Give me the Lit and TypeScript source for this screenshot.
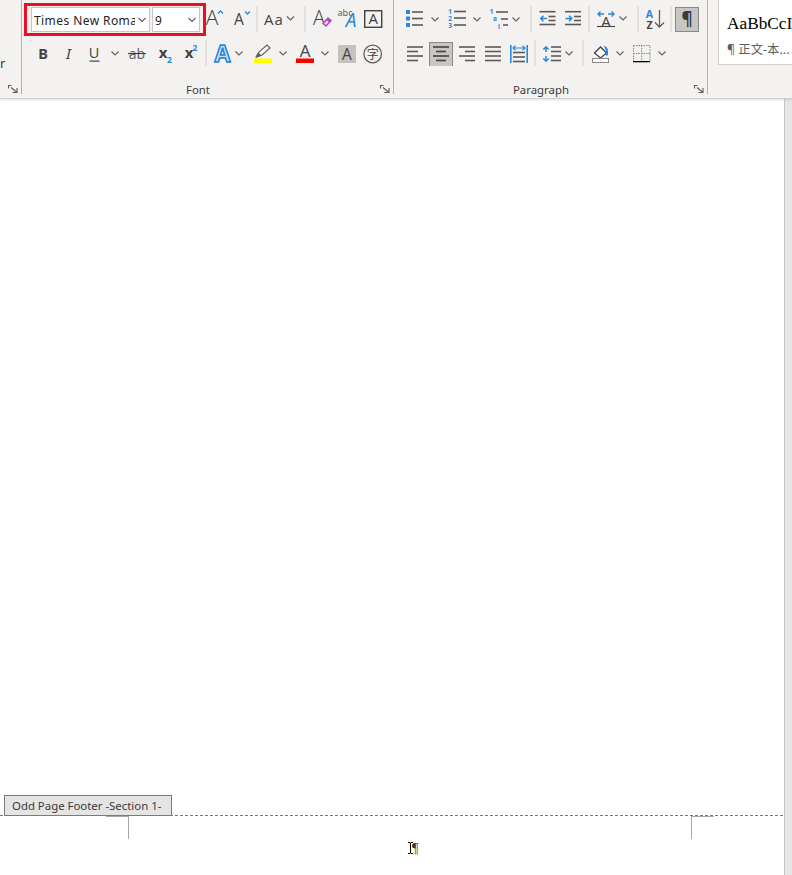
import { LitElement, css, html, svg, SVGTemplateResult } from 'lit';
import { customElement } from 'lit/decorators.js';

const DARK = '#444240';
const BLUE = '#2b88d8';

// icons are written in page coordinates, the viewBox picks the part of the row they sit in
const ROW_Y = [6, 40];

function icon(x0: number, x1: number, row: number, body: SVGTemplateResult | SVGTemplateResult[]) {
  const w = x1 - x0;
  return html`<svg width=${w} height="26" viewBox="${x0} ${ROW_Y[row]} ${w} 26">${body}</svg>`;
}

function bars(x0: number, x1: number, ys: number[], color = '#5c5a58', h = 1.6) {
  return ys.map((y) => svg`<rect x=${x0} y=${y - h / 2} width=${x1 - x0} height=${h} fill=${color} />`);
}

function chev(cx: number, cy: number) {
  return svg`<path d="M${cx - 3.5} ${cy - 1.5}l3.5 3.5l3.5 -3.5" fill="none" stroke="#605e5c" stroke-width="1.1" />`;
}

function sep(x: number, row: number) {
  const y = ROW_Y[row];
  return icon(x - 3, x + 3, row, svg`<rect x=${x - 0.5} y=${y} width="1" height="26" fill="#d2d0ce" />`);
}

function t(x: number, y: number, s: string, size: number, fill = DARK, cls = '') {
  return svg`<text x=${x} y=${y} font-size=${size} fill=${fill} text-anchor="middle" class=${cls}>${s}</text>`;
}

function launcher(x: number) {
  return html`<svg class="launcher" width="19" height="14" viewBox="${x} 80 19 14">
    <path d="M${x + 6} 85.5h3.5M${x + 6.5} 85v3.5M${x + 9} 87.5l5.5 4.5M${x + 15} 88v4.5h-4.5" fill="none" stroke="#605e5c" stroke-width="1.1" />
  </svg>`;
}

const fontRow1 = html`
  ${icon(206, 226, 0, [t(212, 25, 'A', 21, DARK, 'light'), svg`<path d="M218 13.5l2.5 -2.5l2.5 2.5" fill="none" stroke=${BLUE} stroke-width="1.3" />`])}
  ${icon(226, 253.5, 0, [t(239, 25, 'A', 15.5, DARK, 'thin'), svg`<path d="M245 11.5l2.5 2.5l2.5 -2.5" fill="none" stroke=${BLUE} stroke-width="1.3" />`])}
  ${sep(256.5, 0)}
  ${icon(259.5, 301.5, 0, [t(273.5, 25, 'Aa', 15, DARK, 'thin spaced'), chev(290, 18)])}
  ${sep(304.5, 0)}
  ${icon(307.5, 334, 0, [
    t(318.5, 24.5, 'A', 20, DARK, 'light'),
    svg`<path d="M322.5 23.5l5 -5.5l3 2.5l-5 5.5z" fill="#f3d9f7" stroke="#b146c2" stroke-width="1.4" /><path d="M326 20l1.5 -2l3 2.5l-1.5 2z" fill="#b146c2" />`,
  ])}
  ${icon(334, 360, 0, [t(345, 16, 'abc', 9, '#605e5c'), t(351, 27, 'A', 19, BLUE, 'ital')])}
  ${icon(360, 386, 0, [
    svg`<rect x="364.7" y="10.7" width="17" height="16.6" fill="none" stroke="#444240" stroke-width="1.4" />`,
    t(373.2, 24, 'A', 15, DARK, 'thin'),
  ])}
`;

const fontRow2 = html`
  ${icon(31, 55, 1, t(43, 58.5, 'B', 14.5, DARK, 'bold'))}
  ${icon(55, 81, 1, t(68.5, 58.5, 'I', 15, DARK, 'ital'))}
  ${icon(81, 107, 1, [t(94, 58, 'U', 14.5, DARK, 'thin'), svg`<rect x="89.5" y="60.5" width="10" height="1.2" fill=${DARK} />`])}
  ${icon(107, 124, 1, chev(115, 53))}
  ${icon(124, 151, 1, [t(137, 58.5, 'ab', 14, '#605e5c', 'thin'), svg`<rect x="128" y="53" width="18" height="1.1" fill=${DARK} />`])}
  ${icon(151, 177, 1, [t(163, 58, 'x', 15, DARK, 'bold'), t(169.5, 63, '2', 8.5, BLUE, 'bold')])}
  ${icon(177, 202.5, 1, [t(189, 58, 'x', 15, DARK, 'bold'), t(195, 51, '2', 8.5, BLUE, 'bold')])}
  ${sep(205.5, 1)}
  ${icon(208.5, 232, 1, t(222, 61.5, 'A', 23, '#bfdcf5', 'effect'))}
  ${icon(232, 246, 1, chev(239, 53))}
  ${icon(246, 274, 1, [
    svg`<path d="M257 57l2 -5l8 -7l3 3l-8 7z" fill="#fff" stroke="#605e5c" stroke-width="1.2" /><path d="M255 57.5l3 -5l4 3z" fill="#605e5c" />`,
    svg`<rect x="254" y="58.5" width="18" height="4.5" fill="#ffff00" />`,
  ])}
  ${icon(274, 292, 1, chev(283, 53))}
  ${icon(292, 316, 1, [t(305, 57, 'A', 17, DARK, 'thin'), svg`<rect x="296" y="58.5" width="18" height="4.5" fill="#ff0000" />`])}
  ${icon(316, 334, 1, chev(325, 53))}
  ${icon(334, 360, 1, [svg`<rect x="338" y="45" width="18" height="18" fill="#c4c2c0" />`, t(347, 59.5, 'A', 15.5, DARK, 'thin')])}
  ${icon(360, 386, 1, [svg`<circle cx="372.7" cy="54" r="8.8" fill="none" stroke="#605e5c" stroke-width="1.3" />`, t(372.7, 59, '字', 12, '#444240')])}
`;

const paraRow1 = html`
  ${icon(404, 427, 0, [
    svg`<rect x="406" y="10" width="4" height="4" fill=${BLUE} /><rect x="406" y="16.5" width="4" height="4" fill=${BLUE} /><rect x="406" y="23" width="4" height="4" fill=${BLUE} />`,
    ...bars(412, 423, [12, 18.5, 25]),
  ])}
  ${icon(427, 444, 0, chev(435, 19))}
  ${icon(444, 469, 0, [
    t(450, 14, '1', 6.5, BLUE, 'bold'), t(450, 21, '2', 6.5, BLUE, 'bold'), t(450, 28, '3', 6.5, BLUE, 'bold'),
    ...bars(454, 466, [11.5, 18, 25]),
  ])}
  ${icon(469, 486, 0, chev(477, 19))}
  ${icon(486, 510, 0, [
    t(491.5, 14, '1', 6.5, BLUE, 'bold'), t(495, 21, 'a', 6.5, BLUE, 'bold'), t(499, 29, 'i', 6.5, BLUE, 'bold'),
    ...bars(496, 508, [12]), ...bars(501, 508, [19]), ...bars(503, 508, [25]),
  ])}
  ${icon(510, 527.5, 0, chev(516, 19))}
  ${sep(530.5, 0)}
  ${icon(533.5, 560, 0, [
    ...bars(539, 555, [11.7, 24.5]), ...bars(548, 555, [16.5, 20.5]),
    svg`<path d="M546.5 18.5h-6M543 15.7l-2.8 2.8l2.8 2.8" fill="none" stroke=${BLUE} stroke-width="1.5" />`,
  ])}
  ${icon(560, 586, 0, [
    ...bars(565, 581, [11.7, 24.5]), ...bars(574, 581, [16.5, 20.5]),
    svg`<path d="M565.5 18.5h6M569 15.7l2.8 2.8l-2.8 2.8" fill="none" stroke=${BLUE} stroke-width="1.5" />`,
  ])}
  ${sep(589, 0)}
  ${icon(592, 616, 0, [
    svg`<path d="M598 14h6M600.5 11.5l-2.5 2.5l2.5 2.5M608 14h6M611.5 11.5l2.5 2.5l-2.5 2.5" fill="none" stroke=${BLUE} stroke-width="1.4" />`,
    t(606, 27, 'A', 15, DARK, 'thin'),
    ...bars(597, 615, [26.5], DARK, 1.1),
  ])}
  ${icon(616, 634.5, 0, chev(623, 18))}
  ${sep(637.5, 0)}
  ${icon(640.5, 668, 0, [
    t(649, 18, 'A', 10.5, BLUE, 'bold'), t(649, 28.5, 'Z', 10.5, DARK, 'bold'),
    svg`<path d="M659 10v17M654.5 22.5l4.5 4.5l4.5 -4.5" fill="none" stroke="#605e5c" stroke-width="1.3" />`,
  ])}
  ${sep(671, 0)}
  ${icon(674, 700, 0, [
    svg`<rect x="675.5" y="7.5" width="23" height="24" fill="#c8c6c4" stroke="#8a8886" />`,
    t(687, 25, '¶', 17, '#3b3a39', 'bold'),
  ])}
`;

const paraRow2 = html`
  ${icon(404, 428, 1, [...bars(407, 423, [47, 56]), ...bars(407, 418, [51.5, 60.5])])}
  ${icon(428, 454, 1, [
    svg`<rect x="429.5" y="42.5" width="23" height="24" fill="#c8c6c4" stroke="#8a8886" />`,
    ...bars(433, 449, [47, 56], '#444240'), ...bars(436, 446, [51.5, 60.5], '#444240'),
  ])}
  ${icon(454, 480, 1, [...bars(459, 475, [47, 56]), ...bars(465, 475, [51.5, 60.5])])}
  ${icon(480, 506, 1, bars(485, 501, [47, 51.5, 56, 60.5]))}
  ${icon(506, 532, 1, [
    svg`<rect x="510" y="45" width="1.6" height="18" fill=${BLUE} /><rect x="526.4" y="45" width="1.6" height="18" fill=${BLUE} />`,
    svg`<path d="M513 48h12M515.5 45.8l-2.5 2.2l2.5 2.2M522.5 45.8l2.5 2.2l-2.5 2.2" fill="none" stroke=${BLUE} stroke-width="1.2" />`,
    ...bars(513, 525, [52.5, 57, 61.5]),
  ])}
  ${sep(535, 1)}
  ${icon(538, 563, 1, [
    svg`<path d="M546 47v5M543.3 49.5l2.7 -2.7l2.7 2.7M546 56v5M543.3 58.5l2.7 2.7l2.7 -2.7" fill="none" stroke=${BLUE} stroke-width="1.5" />`,
    ...bars(551, 561, [47, 51.5, 56, 60.5]),
  ])}
  ${icon(563, 580, 1, chev(569, 53))}
  ${sep(583, 1)}
  ${icon(586, 612, 1, [
    svg`<path d="M594.5 53l6 -6l6 6l-6 5z" fill="#fff" stroke="#444240" stroke-width="1.3" />`,
    svg`<path d="M604 46c2 0 4 2 4 5v4c-1 1 -2 1 -2 0v-4z" fill=${BLUE} />`,
    svg`<rect x="592.5" y="58.5" width="16" height="4" fill="#fff" stroke="#8a8886" />`,
  ])}
  ${icon(612, 628, 1, chev(620, 53))}
  ${icon(628, 654, 1, [
    svg`<path d="M633.5 45.5h16.5v16M633.5 45.5v16M641.7 45.5v16M633.5 53.5h16.5" fill="none" stroke="#8a8886" stroke-dasharray="1.5 1" />`,
    svg`<rect x="633" y="61" width="17" height="1.3" fill="#000" />`,
  ])}
  ${icon(654, 670, 1, chev(662, 53))}
`;

@customElement('app-root')
export class AppRoot extends LitElement {
  static styles = css`
    :host {
      display: flex;
      flex-direction: column;
      width: 792px;
      height: 875px;
      overflow: hidden;
      background: #fff;
      font-family: 'Noto Sans', 'Open Sans', sans-serif;
      color: #3b3a39;
    }

    svg {
      display: block;
      flex: none;
      overflow: hidden;
    }

    svg text {
      font-family: 'Noto Sans', 'Noto Sans CJK SC', sans-serif;
    }

    svg text.thin {
      font-family: 'Open Sans', sans-serif;
      font-weight: 400;
    }

    svg text.light {
      font-family: 'Open Sans', sans-serif;
      font-weight: 300;
    }

    svg text.spaced {
      letter-spacing: 1px;
    }

    svg text.bold {
      font-weight: 700;
    }

    svg text.ital {
      font-style: italic;
    }

    svg text.effect {
      font-weight: 700;
      stroke: #1f7fd0;
      stroke-width: 1.4px;
    }

    .ribbon {
      flex: none;
      display: flex;
      height: 98px;
      background: #f3f2f1;
      border-bottom: 1px solid #d2d0ce;
      box-shadow: 0 1px 2px rgba(0, 0, 0, 0.12);
      position: relative;
      z-index: 1;
    }

    .group {
      flex: none;
      display: flex;
      flex-direction: column;
      height: 94px;
      box-sizing: border-box;
      border-right: 1px solid #b3b0ad;
    }

    .clip-group {
      width: 22px;
    }

    .font-group {
      width: 372px;
    }

    .para-group {
      width: 314px;
    }

    .styles-group {
      flex: 1;
      min-width: 0;
      padding-left: 10px;
    }

    .row-top {
      display: flex;
      height: 33px;
      margin-top: 3px;
      padding-top: 3px;
      box-sizing: border-box;
    }

    .font-group .row-top {
      padding-top: 0;
    }

    .font-group .row-top > svg {
      margin-top: 3px;
    }

    .row-bottom {
      display: flex;
      margin-top: 4px;
    }

    .font-row-bottom {
      padding-left: 9px;
    }

    .para-row {
      padding-left: 10px;
    }

    .group-foot {
      display: flex;
      margin-top: auto;
      height: 14px;
    }

    .group-name {
      flex: 1;
      text-align: center;
      font-size: 11.4px;
      line-height: 20px;
      color: #3b3a39;
    }

    .clip-r {
      margin-top: 55px;
      font-size: 13px;
      line-height: 16px;
      text-align: right;
      padding-right: 17px;
      color: #3b3a39;
    }

    .clip-group .group-name {
      flex: none;
      width: 2px;
    }

    .highlight-box {
      display: flex;
      box-sizing: border-box;
      width: 182px;
      height: 33px;
      margin-left: 2px;
      padding: 1px 3px 1px 4px;
      gap: 2px;
      border: 3px solid #e81123;
    }

    .combo {
      display: flex;
      align-items: center;
      box-sizing: border-box;
      height: 25px;
      padding-top: 1px;
      background: #fff;
      border: 1px solid #c8c6c4;
      font-size: 12px;
      letter-spacing: 0.42px;
      color: #252423;
      overflow: hidden;
    }

    .combo-font {
      width: 119px;
      padding-left: 2px;
    }

    .combo-size {
      width: 48px;
      padding-left: 2px;
    }

    .combo-text {
      flex: 1;
      min-width: 0;
      overflow: hidden;
      white-space: nowrap;
    }

    .combo svg {
      margin: 0 2px;
    }

    .style-card {
      box-sizing: border-box;
      height: 65px;
      padding: 13px 0 0 8px;
      background: #fff;
      border-left: 1px solid #d2d0ce;
      border-bottom: 1px solid #d2d0ce;
      overflow: hidden;
      white-space: nowrap;
    }

    .style-sample {
      font-family: 'Liberation Serif', serif;
      font-size: 17.3px;
      line-height: 22px;
      color: #000;
    }

    .style-name {
      margin-top: 7px;
      font-family: 'Noto Sans', 'Noto Sans CJK SC', sans-serif;
      font-size: 12.4px;
      line-height: 16px;
      color: #605e5c;
    }

    .body {
      flex: 1;
      display: flex;
      min-height: 0;
    }

    .page {
      flex: 1;
      display: flex;
      flex-direction: column;
      justify-content: flex-end;
      position: relative;
      background: #fff;
    }

    .track {
      flex: none;
      width: 8px;
      box-sizing: border-box;
      background: #e6e6e6;
      border-left: 1px solid #c8c6c4;
    }

    .footer-area {
      position: relative;
      height: 60px;
      box-sizing: border-box;
      background: repeating-linear-gradient(90deg, #787878 0 3px, transparent 3px 5px) top left / 100% 1px no-repeat;
    }

    .footer-tag {
      position: absolute;
      left: 4px;
      top: -20px;
      box-sizing: border-box;
      width: 168px;
      height: 21px;
      background: #e4e4e4;
      border: 1px solid #7a7a7a;
      font-size: 11.4px;
      line-height: 19px;
      padding-left: 7px;
      color: #3b3a39;
      white-space: nowrap;
    }

    .crop {
      position: absolute;
      top: 1px;
      height: 23px;
      box-sizing: border-box;
      border-top: 1px solid #a6a6a6;
    }

    .crop-left {
      left: 106px;
      width: 23px;
      border-right: 1px solid #a6a6a6;
    }

    .crop-right {
      left: 691px;
      width: 23px;
      border-left: 1px solid #a6a6a6;
    }

    .para-mark {
      position: absolute;
      left: 408px;
      top: 27px;
      display: flex;
      align-items: flex-start;
      font-family: 'Liberation Serif', serif;
      font-size: 14px;
      line-height: 13px;
      color: #333;
    }

    .para-mark span {
      margin-left: -1px;
    }
  `;

  private renderCombo(label: string, cls: string) {
    return html`<div class="combo ${cls}">
      <span class="combo-text">${label}</span>
      <svg width="10" height="6" viewBox="0 0 10 6"><path d="M1.5 1l3.5 3.5l3.5 -3.5" fill="none" stroke="#605e5c" stroke-width="1.1" /></svg>
    </div>`;
  }

  render() {
    return html`
      <div class="ribbon">
        <div class="group clip-group">
          <div class="clip-r">r</div>
          <div class="group-foot"><span class="group-name"></span>${launcher(2)}</div>
        </div>
        <div class="group font-group">
          <div class="row-top">
            <div class="highlight-box">
              ${this.renderCombo('Times New Roman', 'combo-font')}
              ${this.renderCombo('9', 'combo-size')}
            </div>
            ${fontRow1}
          </div>
          <div class="row-bottom font-row-bottom">${fontRow2}</div>
          <div class="group-foot"><span class="group-name">Font</span>${launcher(374)}</div>
        </div>
        <div class="group para-group">
          <div class="row-top para-row">${paraRow1}</div>
          <div class="row-bottom para-row">${paraRow2}</div>
          <div class="group-foot"><span class="group-name">Paragraph</span>${launcher(688)}</div>
        </div>
        <div class="styles-group">
          <div class="style-card">
            <div class="style-sample">AaBbCcI</div>
            <div class="style-name">¶ 正文-本...</div>
          </div>
        </div>
      </div>
      <div class="body">
        <div class="page">
          <div class="footer-area">
            <div class="footer-tag">Odd Page Footer -Section 1-</div>
            <div class="crop crop-left"></div>
            <div class="crop crop-right"></div>
            <div class="para-mark">
              <svg width="5" height="12" viewBox="0 0 5 12"><path d="M0 .5h2l.5 .5l.5 -.5h2M2.5 1v10M0 11.5h2l.5 -.5l.5 .5h2" fill="none" stroke="#000" /></svg>
              <span>¶</span>
            </div>
          </div>
        </div>
        <div class="track"></div>
      </div>
    `;
  }
}
